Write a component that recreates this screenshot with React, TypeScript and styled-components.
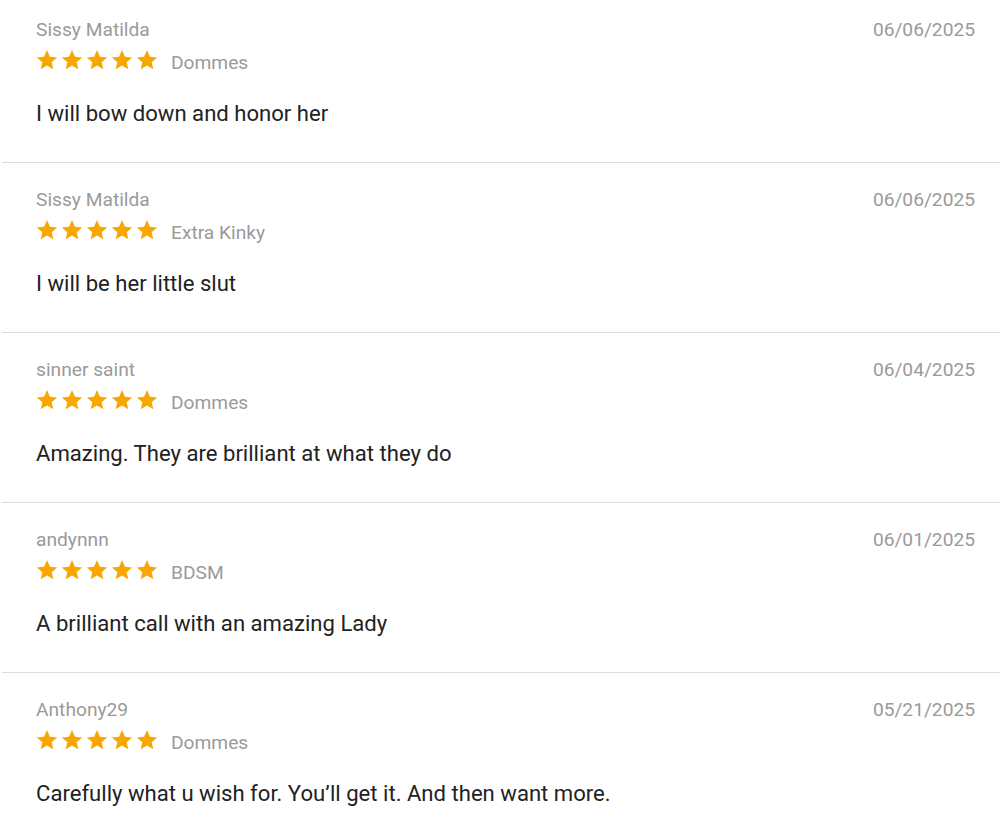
import React from "react";
import styled, { createGlobalStyle } from "styled-components";

const Global = createGlobalStyle`
  html, body { margin: 0; padding: 0; background: #fff; }
  body { font-family: Roboto, "Noto Sans", Arial, sans-serif; }
`;

type Review = { name: string; date: string; category: string; text: string; rating: number };

const reviews: Review[] = [
  { name: "Sissy Matilda", date: "06/06/2025", category: "Dommes", text: "I will bow down and honor her", rating: 5 },
  { name: "Sissy Matilda", date: "06/06/2025", category: "Extra Kinky", text: "I will be her little slut", rating: 5 },
  { name: "sinner saint", date: "06/04/2025", category: "Dommes", text: "Amazing. They are brilliant at what they do", rating: 5 },
  { name: "andynnn", date: "06/01/2025", category: "BDSM", text: "A brilliant call with an amazing Lady", rating: 5 },
  { name: "Anthony29", date: "05/21/2025", category: "Dommes", text: "Carefully what u wish for. You\u2019ll get it. And then want more.", rating: 5 },
];

const List = styled.div`
  display: flex;
  flex-direction: column;
  margin-left: 2px;
`;

const Item = styled.div<{ $first?: boolean }>`
  padding: ${(p) => (p.$first ? "18px" : "25px")} 25px 0 34px;
  height: 144px;
  box-sizing: content-box;
  border-bottom: 1px solid #dddddd;
`;

const Header = styled.div`
  display: flex;
  justify-content: space-between;
  align-items: flex-start;
`;

const Meta = styled.div`
  display: flex;
  flex-direction: column;
`;

const Name = styled.div`
  font-size: 19.2px;
  line-height: 24px;
  color: #9a9a9a;
`;

const DateText = styled.div`
  font-size: 19.2px;
  line-height: 24px;
  color: #9a9a9a;
`;

const RatingRow = styled.div`
  display: flex;
  align-items: center;
  margin-top: 5px;
  height: 26px;
`;

const Stars = styled.div`
  display: flex;
  gap: 3px;
  margin-right: 13px;
`;

const Category = styled.span`
  font-size: 19.2px;
  line-height: 24px;
  color: #9a9a9a;
  margin-top: 6px;
`;

const Body = styled.p`
  margin: 25px 0 0;
  font-size: 22.1px;
  line-height: 30px;
  color: #222;
`;

const Star = () => (
  <svg width="22" height="22" viewBox="0 0 24 24">
    <path
      fill="#f8a700"
      d="M12 1.2l3.2 7.3 7.9.7-6 5.2 1.8 7.8L12 18.1l-6.9 4.1 1.8-7.8-6-5.2 7.9-.7z"
    />
  </svg>
);

export default function App() {
  return (
    <>
      <Global />
      <List>
        {reviews.map((r, i) => (
          <Item key={i} $first={i === 0}>
            <Header>
              <Meta>
                <Name>{r.name}</Name>
                <RatingRow>
                  <Stars>
                    {Array.from({ length: r.rating }).map((_, j) => (
                      <Star key={j} />
                    ))}
                  </Stars>
                  <Category>{r.category}</Category>
                </RatingRow>
              </Meta>
              <DateText>{r.date}</DateText>
            </Header>
            <Body>{r.text}</Body>
          </Item>
        ))}
      </List>
    </>
  );
}
